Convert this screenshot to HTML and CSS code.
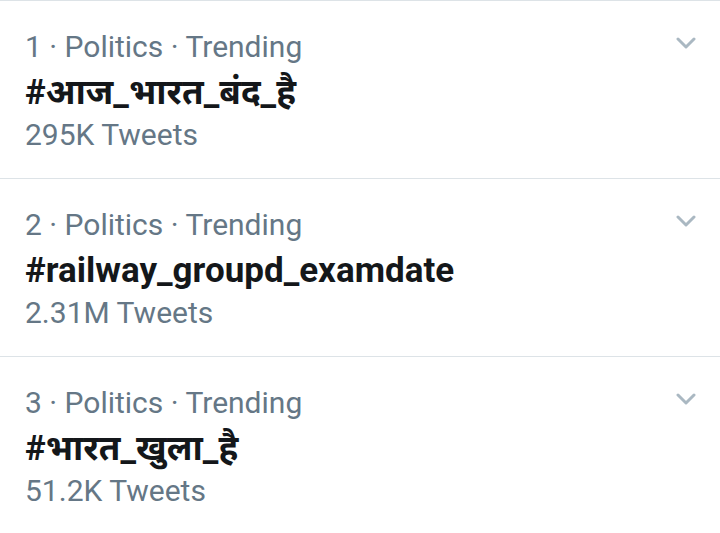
FILE: index.html
```html
<!DOCTYPE html>
<html>
<head>
    <link rel="stylesheet" href="styles.css">
</head>
<body>
    <!-- Trends list -->
    <div class="trends">
        <div class="trend">
            <div class="trend-body">
                <div class="trend-meta">1 · Politics · Trending</div>
                <div class="trend-name">#आज_भारत_बंद_है</div>
                <div class="trend-count">295K Tweets</div>
            </div>
            <svg class="chevron" viewBox="0 0 20 12"><path d="M2 2 L10 10 L18 2"/></svg>
        </div>
        <div class="trend">
            <div class="trend-body">
                <div class="trend-meta">2 · Politics · Trending</div>
                <div class="trend-name">#railway_groupd_examdate</div>
                <div class="trend-count">2.31M Tweets</div>
            </div>
            <svg class="chevron" viewBox="0 0 20 12"><path d="M2 2 L10 10 L18 2"/></svg>
        </div>
        <div class="trend">
            <div class="trend-body">
                <div class="trend-meta">3 · Politics · Trending</div>
                <div class="trend-name">#भारत_खुला_है</div>
                <div class="trend-count">51.2K Tweets</div>
            </div>
            <svg class="chevron" viewBox="0 0 20 12"><path d="M2 2 L10 10 L18 2"/></svg>
        </div>
    </div>
</body>
</html>
```
FILE: styles.css
```css
body {
    margin: 0;
    background: #fff;
    font-family: Roboto, "Noto Sans Devanagari", "Noto Sans", sans-serif;
}
.trends {
    border-top: 1px solid #dde3e7;
}
/* One trend row */
.trend {
    display: flex;
    height: 177px;
    padding: 0 24px 0 25px;
    border-bottom: 1px solid #dde3e7;
    box-sizing: content-box;
}
.trend-body {
    flex: 1;
    padding-top: 24px;
}
.trend-meta {
    color: #657786;
    font-size: 30px;
    line-height: 44px;
}
.trend-name {
    color: #14171a;
    font-size: 35px;
    font-weight: bold;
    line-height: 48px;
}
.trend-count {
    color: #657786;
    font-size: 30px;
    line-height: 44px;
    margin-top: -4px;
}
.chevron {
    width: 20px;
    height: 12px;
    margin-top: 36px;
    fill: none;
    stroke: #aab8c2;
    stroke-width: 3;
    stroke-linecap: round;
    stroke-linejoin: round;
}
```
